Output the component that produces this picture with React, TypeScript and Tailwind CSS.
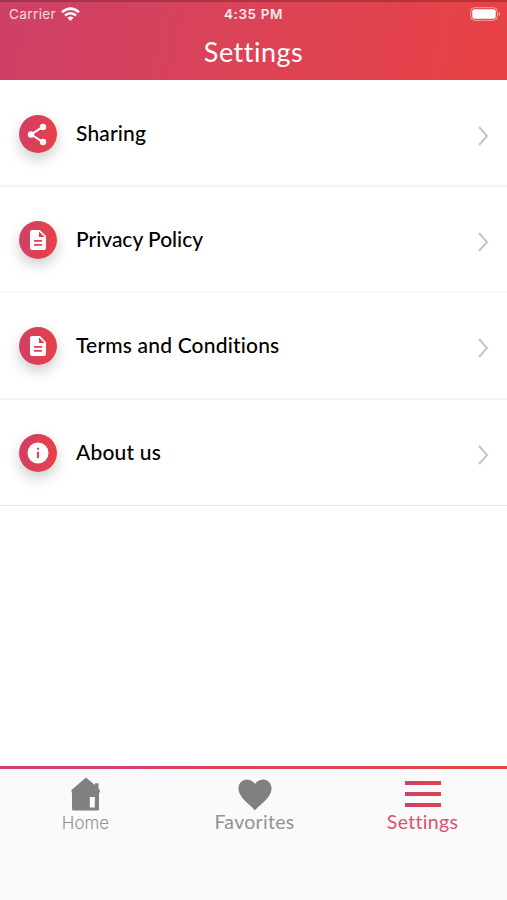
import type { ReactNode } from 'react';

const ShareIcon = () => (
  <svg className="-ml-[2px]" width="20" height="23" viewBox="0 0 20 23" fill="white" stroke="white">
    <path d="M16 3.6 4.2 11.5 16 19.2" fill="none" strokeWidth="2" />
    <circle cx="4" cy="11.5" r="3.2" stroke="none" />
    <circle cx="16" cy="3.9" r="3.2" stroke="none" />
    <circle cx="16" cy="19" r="3.2" stroke="none" />
  </svg>
);

const DocumentIcon = () => (
  <svg width="16" height="20" viewBox="0 0 16 20" fill="white">
    <path
      fillRule="evenodd"
      d="M2 0h8l6 6v12a2 2 0 0 1-2 2H2a2 2 0 0 1-2-2V2a2 2 0 0 1 2-2Zm7 1.5V7h5.5ZM4 10v1.8h8V10Zm0 4v1.8h8V14Z"
    />
  </svg>
);

const InfoIcon = () => (
  <svg width="22" height="22" viewBox="0 0 22 22">
    <circle cx="11" cy="11" r="10.5" fill="white" />
    <path d="M10 5.8h2v2h-2ZM10 9.8h2v6.2h-2Z" fill="#d94359" />
  </svg>
);

type Row = { label: string; icon: ReactNode; text: string; row: string };

const rows: Row[] = [
  { label: 'Sharing', icon: <ShareIcon />, text: 'tracking-[0.15px]', row: 'h-[107px] border-[#f4f4f4] border-b-2' },
  { label: 'Privacy Policy', icon: <DocumentIcon />, text: 'tracking-[-0.02px]', row: 'h-[106px] border-[#f7f7f7] border-b-2 pb-px' },
  { label: 'Terms and Conditions', icon: <DocumentIcon />, text: 'tracking-[0.18px]', row: 'h-[107px] border-[#f5f5f5] border-b-2 pb-[2px]' },
  { label: 'About us', icon: <InfoIcon />, text: 'tracking-[0.2px]', row: 'h-[106px] border-[#e9e9e9] border-b pb-[2px]' },
];

function StatusBar() {
  return (
    <div className="grid h-[27px] grid-cols-3 items-center px-[9px] font-[Inter,sans-serif] text-[13.5px] leading-none text-white">
      <div className="flex items-center gap-[6px]">
        <span className="tracking-[0.4px] text-white/80">Carrier</span>
        <svg className="-mt-[2px] -ml-px" width="19" height="14" viewBox="0 0 19 14" fill="none" stroke="white" strokeWidth="2.5">
          <path d="M1 5.2Q9.5-2 18 5.2M4 8.5q5.5-4.6 11 0" />
          <path d="M6.4 10.8q3.1-2.5 6.2 0L9.5 14Z" fill="white" stroke="none" />
        </svg>
      </div>
      <span className="text-center font-semibold tracking-[0.6px] whitespace-nowrap text-white/90">4:35 PM</span>
      <svg className="-mt-[2px] -mr-[3px] justify-self-end" width="31" height="14" viewBox="0 0 31 14">
        <rect x="0.7" y="0.7" width="26.6" height="12.6" rx="3.8" fill="none" stroke="white" strokeOpacity=".5" />
        <rect x="2.3" y="2.3" width="23.4" height="9.4" rx="2" fill="white" />
        <path d="M28.7 4.6q2.8 2.4 0 4.8Z" fill="white" fillOpacity=".6" />
      </svg>
    </div>
  );
}

export default function App() {
  return (
    <div className="flex h-[900px] w-[507px] flex-col overflow-hidden bg-white font-[Lato,sans-serif]">
      <header className="h-20 shrink-0 border-t-2 border-black/20 bg-linear-[100deg,#cd4067,#dc4356_50%,#e84144] bg-origin-border">
        <div className="-mt-[1px]">
          <StatusBar />
        </div>
        <h1 className="-mt-px text-center text-[27px] leading-[50px] font-normal tracking-[0.5px] text-white">Settings</h1>
      </header>

      <main className="flex-1">
        {rows.map(({ label, icon, text, row }) => (
          <div key={label} className={`flex items-center pr-[18px] pl-[19px] ${row}`}>
            <span className="mt-[3px] flex size-[38px] items-center justify-center rounded-full bg-linear-[100deg,#cf4068,#e94145] shadow-[0_6px_14px_rgba(0,0,0,0.2)]">
              {icon}
            </span>
            <span className={`ml-[19px] flex-1 text-[21px] leading-none font-medium text-black ${text}`}>{label}</span>
            <svg className="mt-[7px]" width="12" height="20" viewBox="0 0 12 20" fill="none" stroke="#c5c5c7" strokeWidth="2">
              <path d="m2 1 8 9-8 9" />
            </svg>
          </div>
        ))}
      </main>

      <div className="h-[3px] shrink-0 bg-linear-to-r from-[#cd4267] to-[#e84447]" />
      <nav className="grid h-[131px] shrink-0 grid-cols-[171px_167px_169px] bg-[#fafafa] text-[#929294]">
        <div className="flex flex-col items-center pt-[8px]">
          <svg width="30" height="34" viewBox="0 0 30 34" fill="#808082">
            <path
              fillRule="evenodd"
              d="M15 .5 24 8V6.3h3.5v5l1.5 2.2v2h-1V32q0 1.5-1.5 1.5h-24Q1 33.5 1 32V15.5H.5V13ZM18.8 20v10.5h5V20Z"
            />
          </svg>
          <span className="mt-[2px] font-[Inter,sans-serif] text-[17px] leading-5 font-light">Home</span>
        </div>
        <div className="flex flex-col items-center pt-[10px]">
          <svg width="34" height="32" viewBox="0 0 34 32" fill="#808082">
            <path d="M17 31.5C14 27 .5 19 .5 9.5.5 4 4.3.5 8.8.5c4 0 6.800 2.2 8.2 4.6C18.4 2.7 21.2.5 25.2.5c4.5 0 8.3 3.5 8.3 9C33.5 19 20 27 17 31.5Z" />
          </svg>
          <span className="mt-px text-[19.5px] leading-5 tracking-[0.3px]">Favorites</span>
        </div>
        <div className="flex flex-col items-center pt-[12px] text-[#d9536a]">
          <div className="flex w-9 flex-col gap-[7px]">
            {[0, 1, 2].map((i) => (
              <div key={i} className="h-[4px] bg-linear-to-r from-[#c9426a] to-[#df4450]" />
            ))}
          </div>
          <span className="mt-[5px] text-[19.5px] leading-5 tracking-[0.3px]">Settings</span>
        </div>
      </nav>
    </div>
  );
}
